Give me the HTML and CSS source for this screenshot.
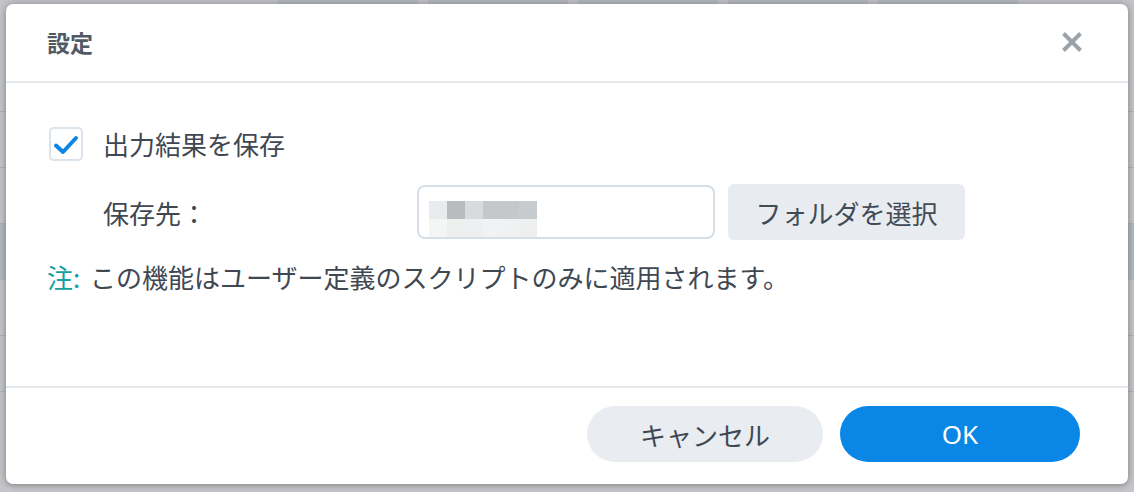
FILE: index.html
```html
<!DOCTYPE html>
<html lang="ja">
<head>
<meta charset="utf-8">
<link rel="stylesheet" href="styles.css">
</head>
<body>
<div class="app">
  <div class="toolbar">
    <span class="tb-search"></span>
    <span class="tb-btn"></span>
    <span class="tb-btn"></span>
    <span class="tb-btn"></span>
    <span class="tb-btn"></span>
    <span class="tb-btn"></span>
  </div>
  <div class="rows">
    <div class="row"></div>
    <div class="row"></div>
    <div class="row"></div>
    <div class="row sel"></div>
    <div class="row"></div>
    <div class="row"></div>
  </div>
</div>

<div class="modal">
  <div class="modal-header">
    <h1 class="modal-title">設定</h1>
    <button class="close-btn" aria-label="閉じる">
      <svg width="22" height="22" viewBox="0 0 22 22"><path d="M2.5 2.5 L19.5 19.5 M19.5 2.5 L2.5 19.5" stroke="#9da2a8" stroke-width="4" stroke-linecap="butt" fill="none"/></svg>
    </button>
  </div>
  <div class="modal-body">
    <label class="check-row">
      <span class="checkbox">
        <svg width="26" height="22" viewBox="0 0 26 22"><path d="M3 11.5 L10 18 L23 4" stroke="#0a86e6" stroke-width="4" stroke-linecap="round" stroke-linejoin="round" fill="none"/></svg>
      </span>
      <span class="check-label">出力結果を保存</span>
    </label>
    <div class="dest-row">
      <span class="dest-label">保存先：</span>
      <div class="path-input">
        <div class="pix">
          <i class="p1"></i><i class="p2"></i><i class="p3"></i><i class="p4"></i><i class="p4"></i><i class="p5"></i>
          <i class="q1"></i><i class="q2"></i><i class="q3"></i><i class="q4"></i><i class="q5"></i><i class="q2"></i>
        </div>
      </div>
      <button class="folder-btn">フォルダを選択</button>
    </div>
    <p class="note"><span class="note-key">注:</span> この機能はユーザー定義のスクリプトのみに適用されます。</p>
  </div>
  <div class="modal-footer">
    <button class="btn btn-cancel">キャンセル</button>
    <button class="btn btn-ok">OK</button>
  </div>
</div>
</body>
</html>
```

FILE: styles.css
```css
* { box-sizing: border-box; }

html, body {
  margin: 0;
  padding: 0;
  width: 1134px;
  height: 492px;
  overflow: hidden;
}

body {
  background: #c4c6c9;
  font-family: "Noto Sans CJK JP", "Noto Sans", sans-serif;
  color: #3f4852;
  position: relative;
}

/* background app (dimmed) */
.app {
  width: 100%;
  height: 100%;
}

.toolbar {
  display: flex;
  align-items: flex-end;
  height: 6px;
  overflow: hidden;
  gap: 10px;
  padding-left: 8px;
}

.tb-search {
  width: 260px;
  height: 6px;
}

.tb-btn {
  width: 140px;
  height: 6px;
  background: #b7bbbf;
}

.rows {
  display: flex;
  flex-direction: column;
  padding-top: 50px;
}

.row {
  height: 56px;
  border-bottom: 1px solid #b2b5b8;
}

.row.sel { background: #b4b9c0; }

/* modal */
.modal {
  position: absolute;
  left: 6px;
  top: 4px;
  width: 1122px;
  height: 480px;
  background: #ffffff;
  border-radius: 7px;
  box-shadow: 0 0 10px rgba(0, 0, 0, 0.28), 0 2px 4px rgba(0, 0, 0, 0.12);
  display: flex;
  flex-direction: column;
}

.modal-header {
  height: 79px;
  flex: none;
  border-bottom: 2px solid #e3e8ec;
  display: flex;
  align-items: center;
  justify-content: space-between;
  padding: 0 45px 0 41px;
}

.modal-title {
  margin: 0;
  font-size: 23px;
  font-weight: 700;
  color: #505a65;
  line-height: 30px;
  padding-bottom: 2px;
}

.close-btn {
  border: 0;
  background: none;
  padding: 0;
  width: 22px;
  height: 22px;
  display: flex;
  margin-bottom: 2px;
}

.modal-body {
  height: 305px;
  flex: none;
  padding: 44px 0 0 43px;
  border-bottom: 2px solid #e3e8ec;
  display: flex;
  flex-direction: column;
}

.check-row {
  display: flex;
  align-items: center;
  height: 34px;
}

.checkbox {
  width: 34px;
  height: 34px;
  border: 2px solid #dbe3ec;
  border-radius: 5px;
  display: flex;
  align-items: center;
  justify-content: center;
  background: #fff;
  flex: none;
}

.checkbox svg { margin-top: 1px; }

.check-label {
  margin-left: 20px;
  font-size: 26px;
  line-height: 34px;
  color: #3f4852;
}

.dest-row {
  display: flex;
  align-items: center;
  margin-top: 23px;
  padding-left: 54px;
  height: 56px;
}

.dest-label {
  width: 314px;
  flex: none;
  font-size: 26px;
  color: #3f4852;
}

.path-input {
  width: 298px;
  height: 54px;
  border: 2px solid #d6dee8;
  border-radius: 8px;
  padding: 14px 0 0 10px;
  flex: none;
}

.pix {
  display: grid;
  grid-template-columns: repeat(6, 18px);
  grid-auto-rows: 18px;
  width: 108px;
}

.pix i { display: block; }
.p1 { background: #eaebec; }
.p2 { background: #b9bcbf; }
.p3 { background: #d9dadc; }
.p4 { background: #c5c8cb; }
.p5 { background: #c8cbce; }
.q1 { background: #f4f5f5; }
.q2 { background: #eef0ef; }
.q3 { background: #eeeff1; }
.q4 { background: #f1f2f4; }
.q5 { background: #f0f1f2; }

.folder-btn {
  margin-left: 13px;
  width: 237px;
  height: 56px;
  border: 0;
  border-radius: 6px;
  background: #e8ecf0;
  font-family: inherit;
  font-size: 26px;
  color: #414b55;
  padding: 0;
}

.note {
  margin: 21px 0 0 -2px;
  font-size: 26px;
  line-height: 32px;
  color: #3f4852;
}

.note-key {
  color: #14a0a0;
  margin-right: 4px;
}

.modal-footer {
  flex: 1;
  display: flex;
  justify-content: flex-end;
  align-items: flex-start;
  gap: 17px;
  padding: 18px 48px 0 0;
}

.btn {
  height: 56px;
  border: 0;
  border-radius: 28px;
  font-family: inherit;
  font-size: 26px;
  padding: 0;
}

.btn-cancel {
  width: 236px;
  background: #e9edf1;
  color: #3f4852;
}

.btn-ok {
  width: 240px;
  background: #0a86e6;
  color: #ffffff;
  font-family: "Noto Sans", "Noto Sans CJK JP", sans-serif;
  font-size: 26px;
}
```
